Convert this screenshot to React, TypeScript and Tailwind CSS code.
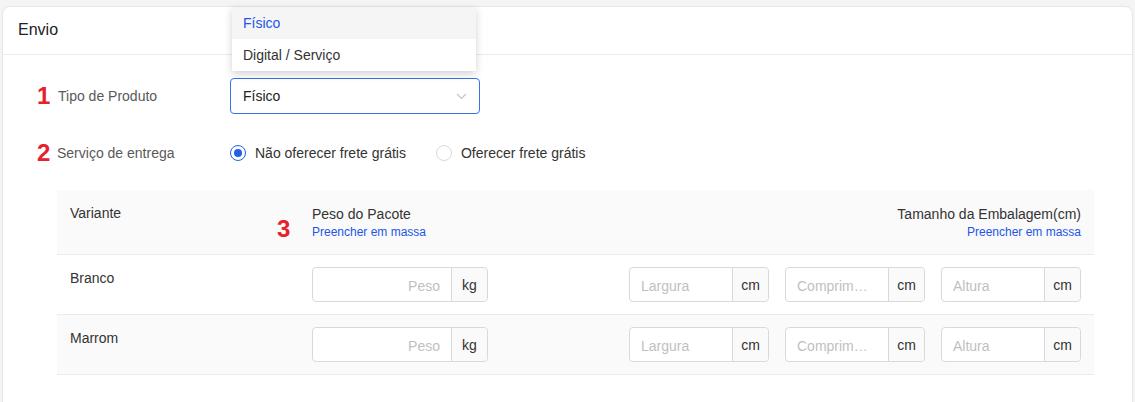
import { useState } from 'react';

type Variant = { name: string; striped: boolean };

const variants: Variant[] = [
  { name: 'Branco', striped: false },
  { name: 'Marrom', striped: true },
];

function Step({ n }: { n: string }) {
  return <span className="w-[21px] text-[24px] font-bold leading-none text-[#e5212b]">{n}</span>;
}

function AddonInput({ placeholder, unit, wide, right }: { placeholder: string; unit: string; wide?: boolean; right?: boolean }) {
  return (
    <div className={`flex h-[35px] rounded-[4px] border border-[#d9d9d9] bg-white ${wide ? 'w-[176px]' : 'w-[140px]'}`}>
      <input
        placeholder={placeholder}
        className={`min-w-0 flex-1 bg-transparent px-[11px] pt-[3px] text-[14px] text-[#333] outline-none placeholder:text-[#bfbfbf] ${right ? 'text-right' : ''}`}
      />
      <span className="flex w-[36px] items-center justify-center rounded-r-[4px] border-l border-[#d9d9d9] bg-[#fafafa] pt-[1px] text-[14px] text-[#333]">
        {unit}
      </span>
    </div>
  );
}

function Radio({ checked, label }: { checked?: boolean; label: string }) {
  return (
    <label className="flex items-center gap-[9px] text-[14px] text-[#333]">
      <span
        className={`flex h-[16px] w-[16px] items-center justify-center rounded-full border bg-white ${checked ? 'border-[#2060ea]' : 'border-[#d9d9d9]'}`}
      >
        {checked && <span className="h-[8px] w-[8px] rounded-full bg-[#2060ea]" />}
      </span>
      {label}
    </label>
  );
}

export default function App() {
  const [tipo] = useState('Físico');

  return (
    <div className="h-[402px] w-[1135px] overflow-hidden bg-[#f4f4f5] pl-[2px] pr-[2px] pt-[6px] font-['Liberation_Sans',Arial,sans-serif]">
      <div className="h-[420px] rounded-t-[8px] border border-[#e6e6e6] bg-white">
        {/* Header */}
        <div className="flex h-[48px] items-center border-b border-[#ebebeb] px-[15px] pb-[2px] text-[16px] text-[#222]">Envio</div>

        <div className="pl-[34px] pt-[23px]">
          {/* Tipo de Produto */}
          <div className="flex h-[36px] items-center">
            <div className="flex w-[193px] items-center">
              <Step n="1" />
              <span className="text-[14px] text-[#595959]">Tipo de Produto</span>
            </div>
            <div className="relative">
              <div className="flex h-[36px] w-[250px] items-center justify-between rounded-[4px] border border-[#3574e3] bg-white pl-[12px] pr-[12px] text-[14px] text-[#222]">
                {tipo}
                <svg width="11" height="7" viewBox="0 0 11 7" fill="none" stroke="#c4c4c4" strokeWidth="1.1">
                  <polyline points="1,1 5.5,5.5 10,1" />
                </svg>
              </div>
              {/* Dropdown */}
              <div className="absolute left-[2px] top-[-71px] z-10 w-[244px] bg-white shadow-[0_3px_8px_rgba(0,0,0,0.18)]">
                <div className="flex h-[32px] items-center bg-[#f5f5f5] px-[11px] text-[14px] text-[#2255e8]">Físico</div>
                <div className="flex h-[32px] items-center px-[11px] text-[14px] text-[#333]">Digital / Serviço</div>
              </div>
            </div>
          </div>

          {/* Serviço de entrega */}
          <div className="mt-[21px] flex h-[36px] items-center">
            <div className="flex w-[193px] items-center">
              <Step n="2" />
              <span className="-ml-[1px] text-[14px] text-[#595959]">Serviço de entrega</span>
            </div>
            <div className="flex items-center gap-[30px]">
              <Radio checked label="Não oferecer frete grátis" />
              <Radio label="Oferecer frete grátis" />
            </div>
          </div>

          {/* Table */}
          <div className="ml-[20px] mt-[19px] w-[1037px]">
            <div className="flex h-[65px] border-b border-[#ebebeb] bg-[#fafafa] pt-[12px]">
              <div className="w-[255px] pl-[13px] text-[14px] leading-[22px] text-[#333]">Variante</div>
              <div className="relative">
                <span className="absolute left-[-35px] top-[15px] text-[24px] font-bold leading-none text-[#e5212b]">3</span>
                <div className="pt-[2px] text-[14px] leading-[20px] text-[#333]">Peso do Pacote</div>
                <div className="text-[12px] leading-[16px] text-[#2255e8]">Preencher em massa</div>
              </div>
              <div className="flex-1 pr-[13px] text-right">
                <div className="pt-[2px] text-[14px] leading-[20px] text-[#333]">Tamanho da Embalagem(cm)</div>
                <div className="text-[12px] leading-[16px] text-[#2255e8]">Preencher em massa</div>
              </div>
            </div>

            {variants.map((v) => (
              <div key={v.name} className={`flex h-[60px] border-b border-[#ebebeb] pt-[12px] ${v.striped ? 'bg-[#fafafa]' : 'bg-white'}`}>
                <div className="w-[255px] pl-[13px] text-[14px] leading-[22px] text-[#333]">{v.name}</div>
                <AddonInput placeholder="Peso" unit="kg" wide right />
                <div className="flex flex-1 justify-end gap-[16px] pr-[13px]">
                  <AddonInput placeholder="Largura" unit="cm" />
                  <AddonInput placeholder="Comprim…" unit="cm" />
                  <AddonInput placeholder="Altura" unit="cm" />
                </div>
              </div>
            ))}
          </div>
        </div>
      </div>
    </div>
  );
}
